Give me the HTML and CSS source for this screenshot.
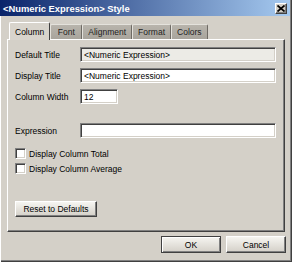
FILE: index.html
```html
<!DOCTYPE html>
<html>
<head>
  <title>&lt;Numeric Expression&gt; Style</title>
  <link rel="stylesheet" href="styles.css">
</head>
<body>
  <div class="window">
    <div class="titlebar">
      <span class="title">&lt;Numeric Expression&gt; Style</span>
      <span class="close">
        <svg width="8" height="7" viewBox="0 0 8 7"><path d="M0.5 0.5 L7.5 6.5 M7.5 0.5 L0.5 6.5" stroke="#000" stroke-width="1.7" fill="none"/></svg>
      </span>
    </div>

    <div class="tabs">
      <span class="tab active">Column</span>
      <span class="tab">Font</span>
      <span class="tab">Alignment</span>
      <span class="tab">Format</span>
      <span class="tab">Colors</span>
    </div>

    <div class="panel">
      <div class="row">
        <span class="label">Default Title</span>
        <span class="field disabled">&lt;Numeric Expression&gt;</span>
      </div>
      <div class="row">
        <span class="label">Display Title</span>
        <span class="field">&lt;Numeric Expression&gt;</span>
      </div>
      <div class="row">
        <span class="label">Column Width</span>
        <span class="field short">12</span>
      </div>
      <div class="row expression">
        <span class="label">Expression</span>
        <span class="field"></span>
      </div>
      <div class="checks">
        <div class="check"><span class="box"></span>Display Column Total</div>
        <div class="check"><span class="box"></span>Display Column Average</div>
      </div>
      <button class="btn reset">Reset to Defaults</button>
    </div>

    <div class="footer">
      <button class="btn default">OK</button>
      <button class="btn">Cancel</button>
    </div>
  </div>
</body>
</html>
```

FILE: styles.css
```css
body {
  margin: 0;
  background-color: #d4d0c8;
  font-family: 'Liberation Sans', Arial, sans-serif;
  font-size: 8.5px;
  color: #000;
}

.window {
  width: 292px;
  height: 262px;
  box-sizing: border-box;
  background-color: #d4d0c8;
  box-shadow: inset 1px 0 #fff, inset -1px -1px #404040, inset -2px -2px #808080;
  overflow: hidden;
}

.titlebar {
  width: 290px;
  height: 16px;
  display: flex;
  align-items: center;
  justify-content: space-between;
  padding: 0 3px 0 3px;
  box-sizing: border-box;
  background: linear-gradient(to right, #0a246a, #a6caf0);
}

.title {
  color: #fff;
  font-weight: bold;
  font-size: 9.4px;
}

.close {
  width: 12px;
  height: 11px;
  display: flex;
  align-items: center;
  justify-content: center;
  box-sizing: border-box;
  background-color: #d4d0c8;
  border: 1px solid;
  border-color: #fff #404040 #404040 #fff;
  box-shadow: inset -1px -1px #808080;
}

.tabs {
  display: flex;
  align-items: flex-end;
  margin-top: 6px;
  padding-left: 9px;
  height: 17px;
}

.tab {
  height: 15px;
  min-width: 32px;
  box-sizing: border-box;
  padding: 0 5px;
  display: flex;
  align-items: center;
  justify-content: center;
  background: linear-gradient(#b8b4ac, #a8a49c);
  color: #222;
  border: 1px solid;
  border-bottom: none;
  border-color: #e4e2dc #6e6a64 #6e6a64 #e4e2dc;
  border-radius: 2px 2px 0 0;
}

.tab.active {
  height: 18px;
  margin-bottom: -1px;
  position: relative;
  background: #d8d4cc;
  color: #000;
  border-color: #fff #404040 #404040 #fff;
}

.panel {
  margin-left: 7px;
  width: 278px;
  height: 193px;
  box-sizing: border-box;
  padding: 7px 7px 0 7px;
  border: 1px solid;
  border-color: #fff #404040 #404040 #fff;
  box-shadow: inset -1px -1px #808080;
}

.row {
  display: flex;
  align-items: center;
  height: 15px;
  margin-bottom: 6px;
}

.row.expression {
  margin-top: 19px;
  margin-bottom: 0;
}

.label {
  width: 65px;
}

.field {
  width: 196px;
  height: 15px;
  box-sizing: border-box;
  padding-left: 3px;
  display: flex;
  align-items: center;
  background-color: #fff;
  border: 1px solid;
  border-color: #808080 #fff #fff #808080;
  box-shadow: inset 1px 1px #404040, inset -1px -1px #d4d0c8;
}

.field.disabled {
  background-color: #ecebe6;
}

.field.short {
  width: 38px;
}

.checks {
  margin-top: 8px;
}

.check {
  height: 15px;
  display: flex;
  align-items: center;
  gap: 3px;
}

.box {
  width: 11px;
  height: 11px;
  box-sizing: border-box;
  background-color: #fff;
  border: 1px solid;
  border-color: #808080 #fff #fff #808080;
  box-shadow: inset 1px 1px #404040, inset -1px -1px #d4d0c8;
}

.btn {
  font-family: inherit;
  font-size: 8.5px;
  color: #000;
  height: 17px;
  padding: 0;
  box-sizing: border-box;
  background: linear-gradient(#f6f5f1, #d4d0c8);
  border: 1px solid;
  border-color: #fff #404040 #404040 #fff;
  box-shadow: inset -1px -1px #808080;
}

.reset {
  display: block;
  margin-top: 25px;
  width: 82px;
  height: 16px;
}

.footer {
  display: flex;
  justify-content: flex-end;
  gap: 5px;
  margin-top: 4px;
  padding-right: 6px;
}

.footer .btn {
  width: 60px;
}

.btn.default {
  border-color: #404040;
  box-shadow: inset 1px 1px #fff, inset -1px -1px #808080;
}
```
